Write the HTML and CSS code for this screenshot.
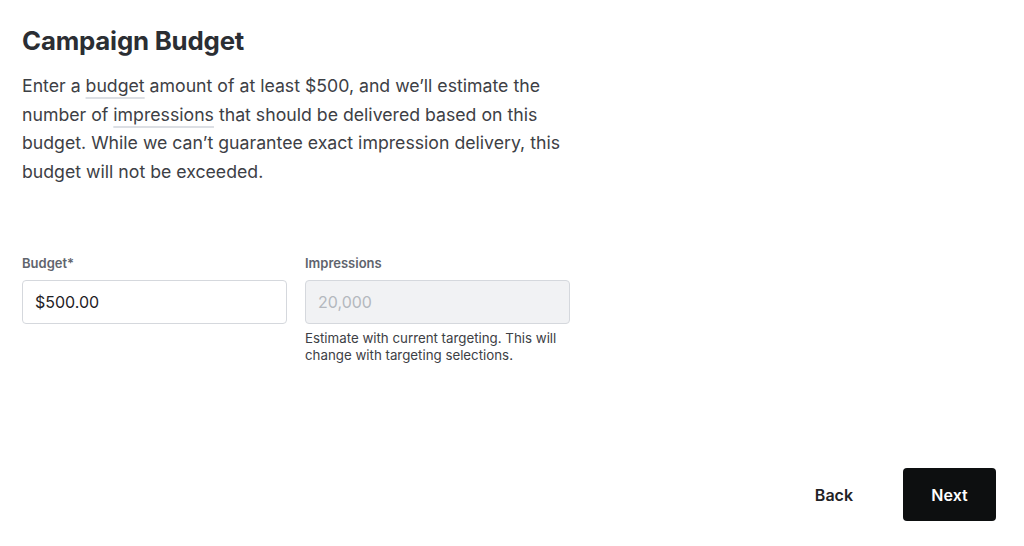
FILE: index.html
```html
<!DOCTYPE html>
<html lang="en">
<head>
  <meta charset="UTF-8">
  <meta name="viewport" content="width=device-width, initial-scale=1.0">
  <title>Campaign Budget</title>
  <link rel="stylesheet" href="styles.css">
</head>
<body>
  <div class="page">
    <div class="intro">
      <h1>Campaign Budget</h1>
      <p>Enter a <span class="term">budget</span> amount of at least $500, and we’ll estimate the number of <span class="term">impressions</span> that should be delivered based on this budget. While we can’t guarantee exact impression delivery, this budget will not be exceeded.</p>
    </div>
    <div class="fields">
      <div class="field">
        <label for="budget">Budget*</label>
        <input class="input" id="budget" type="text" value="$500.00">
      </div>
      <div class="field">
        <label for="impressions">Impressions</label>
        <input class="input" id="impressions" type="text" placeholder="20,000" disabled>
        <div class="hint">Estimate with current targeting. This will change with targeting selections.</div>
      </div>
    </div>
    <div class="actions">
      <button class="btn back">Back</button>
      <button class="btn next">Next</button>
    </div>
  </div>
</body>
</html>
```
FILE: styles.css
```css
body {
  margin: 0;
  background-color: #fff;
  color: #3a3d42;
  font-family: Inter, 'Noto Sans', sans-serif;
}
.page {
  height: 546px;
  box-sizing: border-box;
  padding: 26px 28px 25px 22px;
  display: flex;
  flex-direction: column;
}
.intro {
  width: 570px;
}
h1 {
  margin: 0;
  font-size: 25.8px;
  font-weight: 700;
  color: #2b2e33;
  letter-spacing: -0.2px;
  line-height: 30px;
}
.intro p {
  margin: 16px 0 0;
  font-size: 17.7px;
  line-height: 28.5px;
  color: #3d4045;
}
.term {
  text-decoration: underline;
  text-decoration-color: #dcdfe4;
  text-decoration-thickness: 2px;
  text-underline-offset: 5px;
}
.fields {
  display: flex;
  gap: 18px;
  margin-top: 68px;
}
.field {
  width: 265px;
  display: flex;
  flex-direction: column;
}
.field label {
  font-size: 13px;
  font-weight: 600;
  color: #60646d;
  line-height: 18px;
  margin-bottom: 8px;
}
.input {
  height: 44px;
  box-sizing: border-box;
  border: 1px solid #d5d8dd;
  border-radius: 4px;
  padding: 0 12px;
  font-family: inherit;
  font-size: 16px;
  color: #1f2226;
  background-color: #fff;
}
.input:disabled {
  background-color: #f1f2f4;
}
.input::placeholder {
  color: #b4b8be;
}
.hint {
  margin-top: 6px;
  font-size: 13.3px;
  line-height: 17px;
  color: #3d4045;
}
.actions {
  margin-top: auto;
  display: flex;
  justify-content: flex-end;
  gap: 18px;
}
.btn {
  height: 53px;
  border: none;
  border-radius: 4px;
  font-family: inherit;
  font-size: 16px;
  font-weight: 600;
  cursor: pointer;
}
.back {
  background: none;
  color: #1f2226;
  padding: 0 32px;
}
.next {
  width: 93px;
  background-color: #0d0f10;
  color: #fff;
}
```
